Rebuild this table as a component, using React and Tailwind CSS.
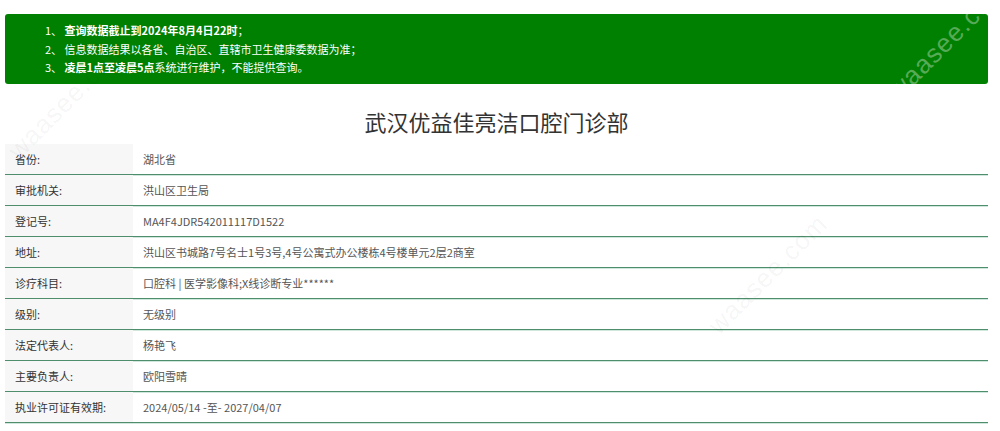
import React from "react";

const rows = [
  ["省份:", "湖北省"],
  ["审批机关:", "洪山区卫生局"],
  ["登记号:", "MA4F4JDR542011117D1522"],
  ["地址:", "洪山区书城路7号名士1号3号,4号公寓式办公楼栋4号楼单元2层2商室"],
  ["诊疗科目:", "口腔科 | 医学影像科;X线诊断专业******"],
  ["级别:", "无级别"],
  ["法定代表人:", "杨艳飞"],
  ["主要负责人:", "欧阳雪晴"],
  ["执业许可证有效期:", "2024/05/14 -至- 2027/04/07"],
];

function Watermark({ className }) {
  return (
    <div
      aria-hidden="true"
      className={
        "pointer-events-none absolute select-none text-[26px] tracking-[1px] -rotate-45 " +
        className
      }
      style={{ fontFamily: "Arial, 'Liberation Sans', sans-serif" }}
    >
      waasee.com
    </div>
  );
}

export default function App() {
  return (
    <div
      className="relative w-[1000px] h-[431px] overflow-hidden bg-white px-[5px] pt-[14px]"
      style={{ fontFamily: "'Noto Sans CJK SC', 'Noto Sans', sans-serif" }}
    >
      <div className="w-[983px] h-[70px] rounded-[3px] bg-[#008000] pl-[40px] pt-[7px] text-[11px] leading-[18.5px] text-white">
        <div>
          1、 <span className="font-bold">查询数据截止到2024年8月4日22时</span>；
        </div>
        <div>2、 信息数据结果以各省、自治区、直辖市卫生健康委数据为准；</div>
        <div>
          3、 <span className="font-bold">凌晨1点至凌晨5点</span>系统进行维护，不能提供查询。
        </div>
      </div>

      <div className="w-[983px] h-[60px] pt-[14px] flex items-center justify-center text-[22px] text-[#333]">
        武汉优益佳亮洁口腔门诊部
      </div>

      <div className="w-[983px] flex flex-col">
        {rows.map(([k, v]) => (
          <div
            key={k}
            className="flex h-[31px] border-b border-[#4e8e6c] shadow-[0_1px_0_#cfe7dc]"
          >
            <div className="w-[128px] shrink-0 bg-[#f7f7f7] pl-[10px] flex items-center text-[11px] text-[#333]">
              {k}
            </div>
            <div className="pl-[10px] flex items-center text-[11px] text-[#555]">
              {v}
            </div>
          </div>
        ))}
      </div>

      <Watermark className="left-[-10px] top-[80px] text-[#000]/[0.05]" />
      <Watermark className="left-[870px] top-[20px] text-white/35" />
      <Watermark className="left-[690px] top-[255px] text-[#000]/[0.05]" />
    </div>
  );
}
